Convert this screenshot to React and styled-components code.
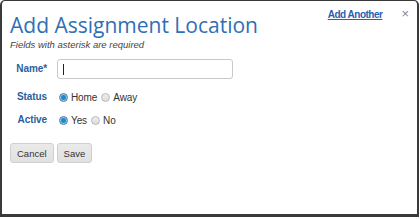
import { createGlobalStyle, styled } from "styled-components";

const Global = createGlobalStyle`
  html, body { margin: 0; padding: 0; background: #fff; }
  body { font-family: "Liberation Sans", Arial, sans-serif; }
`;

const Frame = styled.div`
  width: 420px;
  height: 219px;
  box-sizing: border-box;
  padding: 0 1px 2px 0;
  background: #fff;
`;

const Dialog = styled.div`
  box-sizing: border-box;
  height: 217px;
  background: #fff;
  border: 2px solid #3a3a3a;
  border-top-width: 1px;
  border-bottom-width: 3px;
  border-radius: 5px 5px 0 0;
  padding: 0 8px;
  display: flex;
  flex-direction: column;
`;

const Header = styled.div`
  display: flex;
  justify-content: space-between;
  align-items: flex-start;
`;

const Title = styled.h1`
  margin: 10px 0 0;
  font-family: "Open Sans", sans-serif;
  font-weight: 400;
  font-size: 21px;
  line-height: 28px;
  color: #2f6fb5;
`;

const Tools = styled.div`
  display: flex;
  align-items: center;
  gap: 19px;
  margin-top: 7px;
  margin-right: 0;
`;

const Link = styled.a`
  font-size: 10px;
  font-weight: bold;
  color: #2a5fb4;
  text-decoration: underline;
  letter-spacing: -0.5px;
`;

const Close = styled.span`
  font-size: 13px;
  color: #888;
  line-height: 12px;
`;

const Hint = styled.p`
  margin: 0;
  font-size: 9.5px;
  font-style: italic;
  color: #444;
`;

const Form = styled.div`
  display: grid;
  grid-template-columns: 37px 1fr;
  column-gap: 10px;
  margin-top: 7px;
  align-items: center;
`;

const Label = styled.label`
  text-align: right;
  font-size: 10px;
  font-weight: bold;
  color: #2a5f9e;
  letter-spacing: -0.1px;
  height: ${p => p.$h}px;
  line-height: ${p => p.$h}px;
`;

const Field = styled.div`
  display: flex;
  align-items: center;
  height: ${p => p.$h}px;
`;

const Input = styled.div`
  box-sizing: border-box;
  width: 176px;
  height: 20px;
  border: 1px solid #c9c9c9;
  border-radius: 3px;
  display: flex;
  align-items: center;
  padding-left: 5px;
  &::before {
    content: "";
    width: 1px;
    height: 11px;
    background: #222;
  }
`;

const Radio = styled.span`
  box-sizing: border-box;
  width: 9px;
  height: 9px;
  border-radius: 50%;
  border: 1px solid ${p => (p.$on ? "#4a7fa8" : "#b8b8b8")};
  background: ${p => (p.$on ? "radial-gradient(circle, #1e88d0 0 2px, #9cc4e4 3px)" : "linear-gradient(#eee, #dcdcdc)")};
  margin: 0 3px 0 ${p => (p.$first ? 2 : 4)}px;
`;

const Opt = styled.span`
  font-size: 10px;
  color: #333;
  letter-spacing: -0.1px;
`;

const Buttons = styled.div`
  display: flex;
  gap: 3px;
  margin-top: 16px;
`;

const Button = styled.button`
  font-family: "Liberation Sans", Arial, sans-serif;
  font-size: 9.5px;
  color: #333;
  background: linear-gradient(#eaeaea, #e0e0e0);
  border: 1px solid #cfcfcf;
  border-radius: 3px;
  height: 20px;
  padding: 0 6px;
`;

export default function App() {
  return (
    <Frame>
      <Global />
      <Dialog>
        <Header>
          <Title>Add Assignment Location</Title>
          <Tools>
            <Link>Add Another</Link>
            <Close>×</Close>
          </Tools>
        </Header>
        <Hint>Fields with asterisk are required</Hint>
        <Form>
          <Label $h={24}>Name*</Label>
          <Field $h={24}><Input /></Field>
          <Label $h={32}>Status</Label>
          <Field $h={32}>
            <Radio $on $first /><Opt>Home</Opt>
            <Radio /><Opt>Away</Opt>
          </Field>
          <Label $h={14}>Active</Label>
          <Field $h={14}>
            <Radio $on $first /><Opt>Yes</Opt>
            <Radio /><Opt>No</Opt>
          </Field>
        </Form>
        <Buttons>
          <Button>Cancel</Button>
          <Button>Save</Button>
        </Buttons>
      </Dialog>
    </Frame>
  );
}
